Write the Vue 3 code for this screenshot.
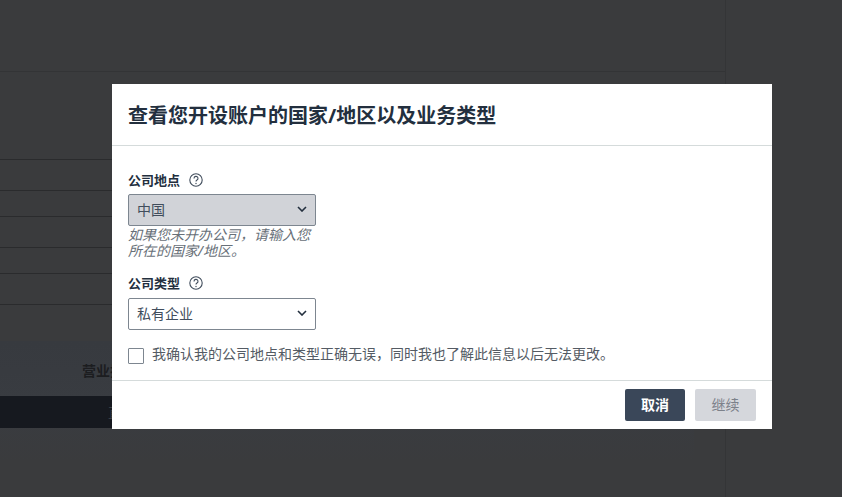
<script setup>
const rows = [31, 26, 31, 26, 31]
</script>

<template>
  <div class="page">
    <div class="backdrop">
      <div class="top-box"></div>
      <div class="rows">
        <div v-for="(h, i) in rows" :key="i" class="row" :style="{ height: h + 'px' }"></div>
      </div>
      <div class="section">
        <div class="section-title">营业执照</div>
        <div class="section-bar"><span>直接</span></div>
      </div>
    </div>

    <div class="modal">
      <header class="modal-head">
        <h1>查看您开设账户的国家/地区以及业务类型</h1>
      </header>
      <div class="modal-body">
        <div class="field">
          <div class="label">
            <span class="label-text">公司地点</span>
            <svg class="help" viewBox="0 0 14 14" width="14" height="14">
              <circle cx="7" cy="7" r="6.2" fill="none" stroke="#414d5c" stroke-width="1.1" />
              <path d="M5 5.4a2 2 0 1 1 3 1.7c-.7.4-1 .8-1 1.5" fill="none" stroke="#414d5c" stroke-width="1.1" />
              <circle cx="7" cy="10.5" r=".7" fill="#414d5c" />
            </svg>
          </div>
          <div class="select disabled">
            <span>中国</span>
            <svg class="chev" viewBox="0 0 10 6" width="10" height="6">
              <path d="M1 1 5 5l4-4" fill="none" stroke="#232f3e" stroke-width="1.6" />
            </svg>
          </div>
          <p class="hint">如果您未开办公司&#xFF0C;请输入您所在的国家/地区。</p>
        </div>
        <div class="field second">
          <div class="label">
            <span class="label-text">公司类型</span>
            <svg class="help" viewBox="0 0 14 14" width="14" height="14">
              <circle cx="7" cy="7" r="6.2" fill="none" stroke="#414d5c" stroke-width="1.1" />
              <path d="M5 5.4a2 2 0 1 1 3 1.7c-.7.4-1 .8-1 1.5" fill="none" stroke="#414d5c" stroke-width="1.1" />
              <circle cx="7" cy="10.5" r=".7" fill="#414d5c" />
            </svg>
          </div>
          <div class="select">
            <span>私有企业</span>
            <svg class="chev" viewBox="0 0 10 6" width="10" height="6">
              <path d="M1 1 5 5l4-4" fill="none" stroke="#232f3e" stroke-width="1.6" />
            </svg>
          </div>
        </div>
        <label class="check">
          <span class="box"></span>
          <span>我确认我的公司地点和类型正确无误&#xFF0C;同时我也了解此信息以后无法更改。</span>
        </label>
      </div>
      <footer class="modal-foot">
        <button class="btn primary" type="button">取消</button>
        <button class="btn off" type="button">继续</button>
      </footer>
    </div>
  </div>
</template>

<style>
html, body { margin: 0; background: #3a3b3d; }
</style>

<style scoped>
.page {
  position: relative;
  width: 842px;
  height: 497px;
  overflow: hidden;
  background: #3a3b3d;
  font-family: "Noto Sans", "Noto Sans CJK SC", sans-serif;
}
.backdrop {
  width: 725px;
  height: 497px;
  border-right: 1px solid #343537;
}
.top-box {
  height: 72px;
  border-bottom: 1px solid #333436;
  box-sizing: border-box;
}
.rows {
  margin-top: 87px;
  width: 112px;
  border-top: 1px solid #2a2b2d;
}
.row {
  box-sizing: border-box;
  border-bottom: 1px solid #2a2b2d;
}
.section {
  margin-top: 36px;
  width: 694px;
  height: 120px;
  padding-top: 20px;
  box-sizing: border-box;
  background: linear-gradient(#373a3f 0%, #393c41 50%, #3a3b3d 100%);
}
.section-title {
  padding-left: 82px;
  height: 35px;
  font-size: 14px;
  line-height: 20px;
  font-weight: 700;
  color: #1c1d20;
}
.section-bar {
  height: 32px;
  background: #16191f;
  padding-left: 108px;
  font-size: 14px;
  line-height: 34px;
  color: #3a3d42;
}
.modal {
  position: absolute;
  left: 112px;
  top: 84px;
  width: 660px;
  height: 345px;
  background: #fff;
  display: flex;
  flex-direction: column;
  color: #16191f;
}
.modal-head {
  height: 62px;
  box-sizing: border-box;
  border-bottom: 1px solid #d5dbdb;
  padding: 19px 16px 0;
}
.modal-head h1 {
  margin: 0;
  font-size: 20px;
  line-height: 26px;
  font-weight: 700;
  color: #232f3e;
  white-space: nowrap;
}
.modal-body {
  flex: 1;
  padding: 25px 16px 0;
}
.field { width: 188px; }
.second { margin-top: 15px; }
.second .label { margin-bottom: 6px; }
.label {
  display: flex;
  align-items: center;
  gap: 9px;
  height: 18px;
  margin-bottom: 5px;
  font-size: 13px;
  font-weight: 700;
  color: #232f3e;
}
.label-text { padding-bottom: 2px; }
.select {
  height: 32px;
  box-sizing: border-box;
  border: 1px solid #7d8690;
  border-radius: 2px;
  padding: 0 8px 2px 8px;
  display: flex;
  align-items: center;
  justify-content: space-between;
  font-size: 14px;
  color: #414d5c;
  background: #fff;
}
.select.disabled { background: #d1d3d8; }
.hint {
  margin: 1px 0 0;
  font-size: 14px;
  line-height: 16px;
  font-style: italic;
  color: #687078;
}
.check {
  display: flex;
  align-items: flex-start;
  gap: 8px;
  margin-top: 14px;
  font-size: 14px;
  line-height: 20px;
  color: #545b64;
  white-space: nowrap;
}
.box {
  flex: none;
  width: 14px;
  height: 14px;
  margin-top: 4px;
  border: 1px solid #7d8690;
  border-radius: 1px;
}
.modal-foot {
  height: 49px;
  box-sizing: border-box;
  border-top: 1px solid #d5dbdb;
  padding: 8px 16px 0;
  display: flex;
  justify-content: flex-end;
  gap: 10px;
}
.btn {
  height: 32px;
  border: none;
  border-radius: 2px;
  font-family: inherit;
  font-size: 14px;
  padding: 0 0 2px;
}
.primary {
  width: 60px;
  background: #3a4759;
  color: #fff;
  font-weight: 700;
}
.off {
  width: 61px;
  background: #d5d7dc;
  color: #7c818a;
}
</style>
